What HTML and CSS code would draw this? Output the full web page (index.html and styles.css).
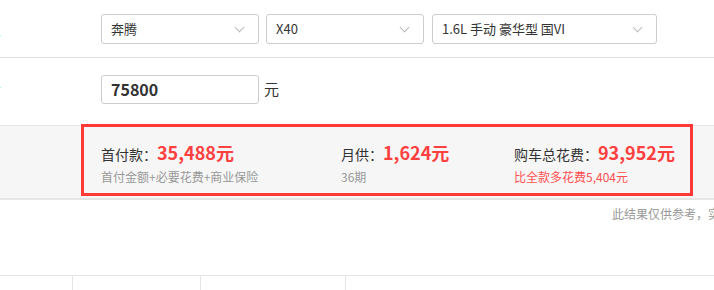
FILE: index.html
```html
<!DOCTYPE html>
<html lang="zh-CN">
<head>
    <meta charset="UTF-8">
    <title>贷款计算器</title>
    <link rel="stylesheet" href="styles.css">
</head>
<body>

    <div class="calc">
        <div class="row row-car">
            <span class="label">选择车型</span>
            <div class="select sel-brand">奔腾<i class="arrow"></i></div>
            <div class="select sel-series">X40<i class="arrow"></i></div>
            <div class="select sel-spec">1.6L 手动 豪华型 国VI<i class="arrow"></i></div>
        </div>

        <div class="row row-price">
            <span class="label">裸车价格</span>
            <div class="price-input">75800</div>
            <span class="unit">元</span>
        </div>

        <div class="result-band">
            <div class="result">
                <div class="item">
                    <div class="main">首付款：<b>35,488元</b></div>
                    <div class="sub">首付金额+必要花费+商业保险</div>
                </div>
                <div class="item">
                    <div class="main">月供：<b>1,624元</b></div>
                    <div class="sub">36期</div>
                </div>
                <div class="item">
                    <div class="main">购车总花费：<b>93,952元</b></div>
                    <div class="sub sub-red">比全款多花费5,404元</div>
                </div>
            </div>
        </div>

        <div class="note">此结果仅供参考，实际应缴费以当地为准</div>

        <div class="table">
            <div class="cell c1"></div>
            <div class="cell c2"></div>
            <div class="cell c3"></div>
            <div class="cell c4"></div>
        </div>
    </div>

</body>
</html>
```

FILE: styles.css
```css
body {
    margin: 0;
    font-family: "Noto Sans CJK SC", "Noto Sans", sans-serif;
    color: #333;
    background: #fff;
    overflow: hidden;
}
.calc {
    width: 714px;
}
.row {
    display: flex;
    align-items: center;
    padding-left: 101px;
    position: relative;
}
.label {
    position: absolute;
    right: 713px;
    font-size: 14px;
    color: #8ef;
    white-space: nowrap;
}
.row-car {
    height: 57px;
    border-bottom: 1px solid #e3e3e3;
    gap: 7px;
}
.select {
    position: relative;
    box-sizing: border-box;
    height: 30px;
    line-height: 28px;
    border: 1px solid #ccc;
    border-radius: 3px;
    padding-left: 9px;
    font-size: 13px;
    color: #333;
    background: #fff;
}
.sel-brand { width: 158px; }
.sel-series { width: 158px; }
.sel-spec { width: 225px; margin-left: 1px; }
.arrow {
    position: absolute;
    right: 15px;
    top: 9px;
    width: 6px;
    height: 6px;
    border-right: 1px solid #bbb;
    border-bottom: 1px solid #bbb;
    transform: rotate(45deg);
}
.row-price {
    height: 67px;
    align-items: flex-start;
    padding-top: 17px;
    box-sizing: border-box;
}
.price-input {
    box-sizing: border-box;
    width: 158px;
    height: 29px;
    line-height: 27px;
    border: 1px solid #ccc;
    border-radius: 3px;
    padding-left: 9px;
    font-size: 16px;
    font-weight: bold;
    color: #333;
}
.unit {
    margin-left: 5px;
    font-size: 15px;
    line-height: 27px;
}
.result-band {
    height: 72px;
    background: #f6f6f6;
    border-top: 1px solid #e5e5e5;
    border-bottom: 2px solid #e5e5e5;
}
.result {
    box-sizing: border-box;
    margin: -2px 0 0 81px;
    width: 612px;
    height: 72px;
    border: 3px solid #ff3838;
    display: grid;
    grid-template-columns: 240px 173px 1fr;
    padding: 13px 0 0 17px;
}
.main {
    font-size: 14px;
    line-height: 24px;
    color: #333;
    white-space: nowrap;
}
.main b {
    font-size: 18px;
    color: #ff4040;
    font-weight: bold;
}
.sub {
    margin-top: 3px;
    font-size: 12px;
    line-height: 16px;
    color: #999;
    white-space: nowrap;
}
.sub-red {
    color: #ff5050;
}
.note {
    padding: 6px 0 0 612px;
    height: 69px;
    font-size: 12px;
    line-height: 16px;
    color: #999;
    white-space: nowrap;
}
.table {
    display: grid;
    grid-template-columns: 73px 128px 145px 1fr;
    height: 14px;
    border-top: 1px solid #e5e5e5;
}
.cell {
    border-right: 1px solid #e5e5e5;
}
.c4 {
    border-right: none;
}
```
